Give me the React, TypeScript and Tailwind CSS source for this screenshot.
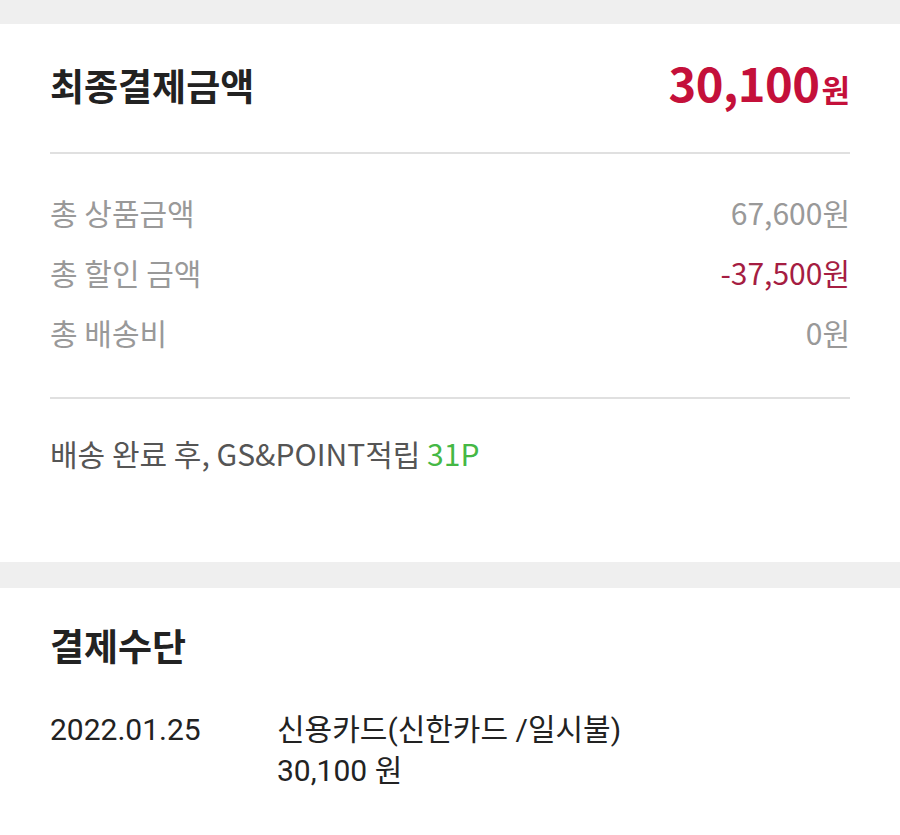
import React from 'react';

const kr = "font-['Noto_Sans_CJK_KR','Noto_Sans',sans-serif]";
const rb = "font-['Roboto','Noto_Sans_CJK_KR',sans-serif]";

const rows = [
  { label: '총 상품금액', value: '67,600원', color: 'text-[#999999]' },
  { label: '총 할인 금액', value: '-37,500원', color: 'text-[#a51d42]' },
  { label: '총 배송비', value: '0원', color: 'text-[#999999]' },
];

const App = () => {
  return (
    <div className={`w-[900px] min-h-[835px] bg-white ${kr}`}>
      <div className="h-[24px] bg-[#efefef]" />

      <section className="px-[50px] pt-[37px] pb-[89px]">
        <div className="flex items-center justify-between h-[48px]">
          <h2 className="text-[37px] leading-[48px] font-bold text-[#222222]">최종결제금액</h2>
          <div className="flex items-baseline text-[#c4103a] font-bold">
            <span className="text-[47px] leading-[48px] tracking-[-0.5px]">30,100</span>
            <span className="text-[31px] leading-[48px] ml-[2px]">원</span>
          </div>
        </div>

        <div className="mt-[43px] h-[2px] bg-[#e0e0e0]" />

        <div className="pt-[28px]">
          {rows.map((row, index) => (
            <div key={index} className="flex items-center justify-between h-[60px] text-[30px] leading-[60px]">
              <span className="text-[#999999]">{row.label}</span>
              <span className={row.color}>{row.value}</span>
            </div>
          ))}
        </div>

        <div className="mt-[35px] h-[2px] bg-[#e0e0e0]" />

        <p className="mt-[34px] text-[30px] leading-[40px] text-[#555555]">
          배송 완료 후, GS&POINT적립 <span className="text-[#45b845]">31P</span>
        </p>
      </section>

      <div className="h-[26px] bg-[#efefef]" />

      <section className="px-[50px] pt-[33px] pb-[40px]">
        <h2 className="text-[37px] leading-[48px] font-bold text-[#222222]">결제수단</h2>
        <div className={`mt-[40px] flex text-[30px] leading-[41px] text-[#222222] ${rb}`}>
          <div className="w-[227px] shrink-0">2022.01.25</div>
          <div>
            <div>신용카드(신한카드 /일시불)</div>
            <div>30,100 원</div>
          </div>
        </div>
      </section>
    </div>
  );
};

export default App;
